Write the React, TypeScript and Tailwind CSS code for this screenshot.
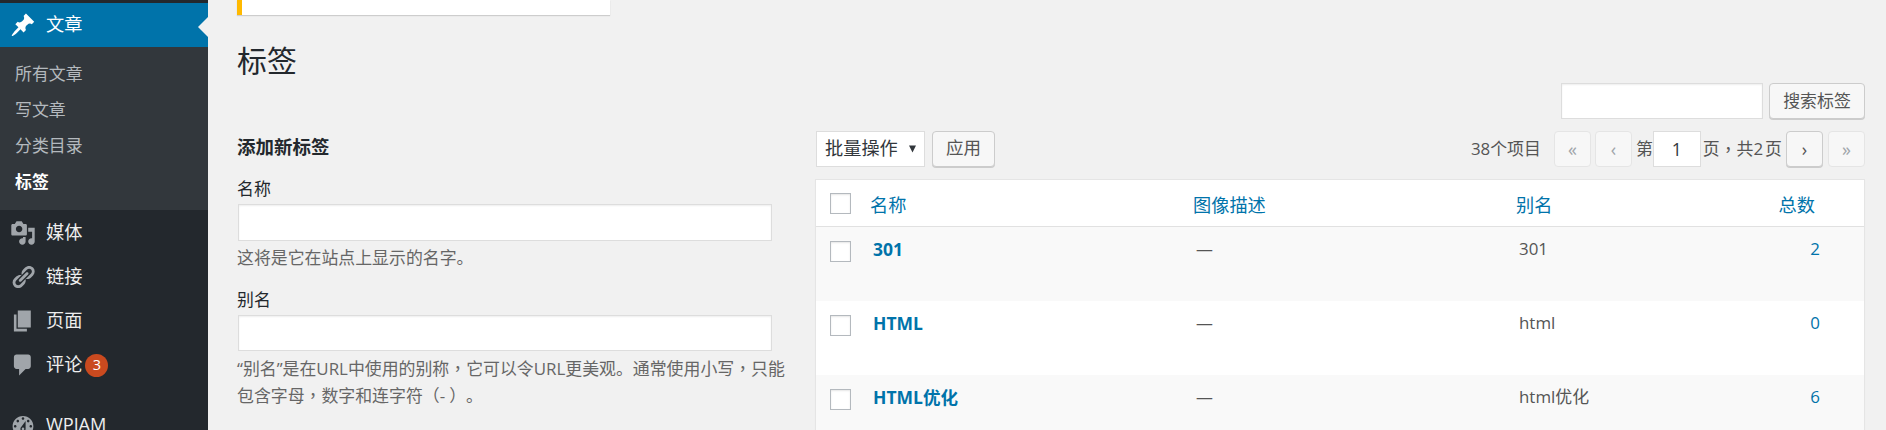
import type { ReactNode } from "react";

const FONT = "font-['Open_Sans','Noto_Sans_CJK_SC',sans-serif]";

const ICONS = {
  pin: "M10.44 3.02l1.82-1.82 6.36 6.35-1.83 1.82c-1.05-.68-2.48-.57-3.41.36l-.75.75c-.92.93-1.04 2.35-.35 3.41l-1.83 1.82-2.41-2.41-2.8 2.79c-.42.42-3.38 2.71-3.8 2.29s1.86-3.39 2.28-3.81l2.79-2.79L4.1 9.36l1.83-1.82c1.05.69 2.48.57 3.4-.36l.75-.75c.93-.92 1.05-2.35.36-3.41z",
  media:
    "M13 11V4c0-.55-.45-1-1-1h-1.67L9 1H5L3.67 3H2c-.55 0-1 .45-1 1v7c0 .55.45 1 1 1h10c.55 0 1-.45 1-1zM7 4.5c1.38 0 2.5 1.12 2.5 2.5S8.38 9.5 7 9.5 4.5 8.38 4.5 7 5.62 4.5 7 4.5zM14 6h5v10.5c0 1.38-1.12 2.5-2.5 2.5S14 17.88 14 16.5s1.12-2.5 2.5-2.5c.17 0 .34.02.5.05V9h-3V6zm-4 8.05V13h2v3.5c0 1.38-1.12 2.5-2.5 2.5S7 17.88 7 16.5 8.12 14 9.5 14c.17 0 .34.02.5.05z",
  link: "M17.74 2.76c1.68 1.69 1.68 4.41 0 6.1l-1.53 1.52c-1.12 1.12-2.7 1.47-4.14 1.09l2.62-2.61.76-.77.76-.76c.84-.84.84-2.2 0-3.04-.84-.85-2.2-.85-3.04 0l-.77.76-3.38 3.38c-.37-1.44-.02-3.02 1.1-4.14l1.52-1.53c1.69-1.68 4.42-1.68 6.1 0zM8.59 13.43l5.34-5.34c.42-.42.42-1.1 0-1.52-.44-.43-1.13-.39-1.53 0l-5.33 5.34c-.42.42-.42 1.1 0 1.52.44.43 1.13.39 1.52 0zm-.76 2.29l4.14-4.15c.38 1.44.03 3.02-1.09 4.14l-1.52 1.53c-1.69 1.68-4.41 1.68-6.1 0-1.68-1.68-1.68-4.42 0-6.1l1.53-1.52c1.12-1.12 2.7-1.47 4.14-1.1l-4.14 4.15c-.85.84-.85 2.2 0 3.05.84.84 2.2.84 3.04 0z",
  page: "M6 15V2h10v13H6zm-1 1h8v2H3V5h2v11z",
  comment: "M5 2h9c1.1 0 2 .9 2 2v7c0 1.1-.9 2-2 2h-2l-5 5v-5H5c-1.1 0-2-.9-2-2V4c0-1.1.9-2 2-2z",
  gauge:
    "M3.76 16h12.48c1.1-1.37 1.76-3.11 1.76-5 0-4.42-3.58-8-8-8s-8 3.58-8 8c0 1.89.66 3.63 1.76 5zM10 4c.55 0 1 .45 1 1s-.45 1-1 1-1-.45-1-1 .45-1 1-1zM6 6c.55 0 1 .45 1 1s-.45 1-1 1-1-.45-1-1 .45-1 1-1zm8 0c.55 0 1 .45 1 1s-.45 1-1 1-1-.45-1-1 .45-1 1-1zm-5.37 5.55L12 7v6c0 1.1-.9 2-2 2s-2-.9-2-2c0-.57.24-1.08.63-1.45zM4 10c.55 0 1 .45 1 1s-.45 1-1 1-1-.45-1-1 .45-1 1-1zm12 0c.55 0 1 .45 1 1s-.45 1-1 1-1-.45-1-1 .45-1 1-1zm-5 3c0-.55-.45-1-1-1s-1 .45-1 1 .45 1 1 1 1-.45 1-1z",
};

const ROWS = [
  { name: "301", slug: "301", count: 2, alt: true },
  { name: "HTML", slug: "html", count: 0, alt: false },
  { name: "HTML优化", slug: "html优化", count: 6, alt: true },
];

function DashIcon({ d, className }: { d: string; className: string }) {
  return (
    <svg viewBox="0 0 20 20" fill="currentColor" className={`w-[26px] h-[26px] shrink-0 ${className}`}>
      <path d={d} />
    </svg>
  );
}

// the reference's font centres the full-width comma, the TC cut does too
function Comma() {
  return <span className="font-['Noto_Sans_CJK_TC',sans-serif]">，</span>;
}

function MenuItem({ icon, label, badge }: { icon: string; label: string; badge?: number }) {
  return (
    <div className="h-[44px] flex items-center pl-[10px] text-[18.2px] text-[#eee]">
      <DashIcon d={icon} className="text-[#a0a5aa]" />
      <span className="ml-[10px]">{label}</span>
      {badge !== undefined && (
        <span className="ml-[3px] w-[23px] h-[23px] rounded-full bg-[#ca4a1f] text-white text-[14.5px] flex items-center justify-center">
          {badge}
        </span>
      )}
    </div>
  );
}

function Sidebar() {
  return (
    <aside className="w-[208px] shrink-0 bg-[#23282d] pt-[3px]">
      <div className="relative h-[44px] bg-[#0073aa] flex items-center pl-[10px] text-[18.2px] text-white">
        <DashIcon d={ICONS.pin} className="text-white" />
        <span className="ml-[10px]">文章</span>
        <span className="absolute right-0 top-[14px] w-0 h-0 border-y-[10px] border-y-transparent border-r-[10px] border-r-[#f1f1f1]" />
      </div>
      <div className="h-[163px] bg-[#32373c] pt-[9px] pl-[15px] text-[16.9px] text-[#b4b9be]">
        <div className="h-[36px] leading-[36px]">所有文章</div>
        <div className="h-[36px] leading-[36px]">写文章</div>
        <div className="h-[36px] leading-[36px]">分类目录</div>
        <div className="h-[36px] leading-[36px] font-bold text-white">标签</div>
      </div>
      <div className="pt-px">
        <MenuItem icon={ICONS.media} label="媒体" />
        <MenuItem icon={ICONS.link} label="链接" />
        <MenuItem icon={ICONS.page} label="页面" />
        <MenuItem icon={ICONS.comment} label="评论" badge={3} />
      </div>
      <div className="mt-[16px]">
        <MenuItem icon={ICONS.gauge} label="WPJAM" />
      </div>
    </aside>
  );
}

function Button({ children, className = "" }: { children: ReactNode; className?: string }) {
  return (
    <div
      className={`h-[36px] flex items-center justify-center bg-[#f7f7f7] border border-[#ccc] rounded-[4px] shadow-[0_1px_0_#ccc] text-[#555] ${className}`}
    >
      {children}
    </div>
  );
}

function PageButton({ children, active = false }: { children: string; active?: boolean }) {
  if (active) {
    return <Button className="w-[37px] text-[18px]">{children}</Button>;
  }
  return (
    <div className="w-[37px] h-[36px] flex items-center justify-center bg-[#f7f7f7] border border-[#e5e5e5] rounded-[4px] text-[#a0a5aa] text-[18px]">
      {children}
    </div>
  );
}

function TextInput({ className = "" }: { className?: string }) {
  return <div className={`bg-white border border-[#ddd] shadow-[inset_0_1px_2px_rgba(0,0,0,0.07)] ${className}`} />;
}

function Checkbox() {
  return <div className="w-[21px] h-[21px] bg-white border border-[#b4b9be] shadow-[inset_0_1px_2px_rgba(0,0,0,0.1)]" />;
}

function AddTagForm() {
  return (
    <div className="w-[553px] shrink-0 pt-[4px]">
      <h2 className="text-[18.5px] leading-[24px] font-bold text-[#23282d]">添加新标签</h2>
      <div className="mt-[18px] leading-[24px] text-[#23282d]">名称</div>
      <TextInput className="h-[37px] mt-[3px] ml-px w-[534px]" />
      <p className="mt-[4px] leading-[26px] text-[#666]">这将是它在站点上显示的名字。</p>
      <div className="mt-[17px] leading-[24px] text-[#23282d]">别名</div>
      <TextInput className="h-[36px] mt-[3px] ml-px w-[534px]" />
      <p className="mt-[4px] leading-[26px] text-[#666] [text-spacing-trim:space-all]">
        “别名”是在URL中使用的别称
        <Comma />
        它可以令URL更美观。通常使用小写
        <Comma />
        只能
        <br />
        包含字母
        <Comma />
        数字和连字符（-<span className="ml-[4px]">）</span>。
      </p>
    </div>
  );
}

function TagTable() {
  return (
    <div className="mt-[12px] bg-white border border-[#e5e5e5] shadow-[0_1px_1px_rgba(0,0,0,0.04)]">
      <div className="h-[47px] grid grid-cols-[54px_323px_323px_1fr] border-b border-[#e1e1e1] text-[#0073aa] text-[18.2px]">
        <div className="pl-[14px] pt-[13px]">
          <Checkbox />
        </div>
        <div className="pt-[13px] leading-[24px]">名称</div>
        <div className="pt-[13px] leading-[24px]">图像描述</div>
        <div className="pt-[13px] leading-[24px] flex justify-between pr-[49px]">
          <span>别名</span>
          <span>总数</span>
        </div>
      </div>
      {ROWS.map((row) => (
        <div
          key={row.name}
          className={`h-[74px] grid grid-cols-[54px_323px_323px_1fr] ${row.alt ? "bg-[#f9f9f9]" : "bg-white"}`}
        >
          <div className="pl-[14px] pt-[14px]">
            <Checkbox />
          </div>
          <div className="pl-[3px] pt-[10px] leading-[24px] font-bold text-[#0073aa] text-[17.5px]">{row.name}</div>
          <div className="pl-[3px] pt-[10px] leading-[24px] text-[#555]">—</div>
          <div className="pl-[3px] pt-[10px] leading-[24px] text-[#555] flex justify-between pr-[44px]">
            <span>{row.slug}</span>
            <span className="text-[#0073aa]">{row.count}</span>
          </div>
        </div>
      ))}
    </div>
  );
}

function TagList() {
  return (
    <div className="flex-1 min-w-0">
      <div className="flex items-start">
        <div className="ml-px w-[109px] h-[36px] bg-white border border-[#ddd] flex items-center pl-[8px] text-[#32373c]">
          <span className="text-[18.2px]">批量操作</span>
          <svg viewBox="0 0 8 8" className="w-[7px] h-[8px] ml-[11px] fill-[#32373c]">
            <path d="M0 0h8L4 8z" />
          </svg>
        </div>
        <Button className="ml-[7px] w-[63px] text-[17.5px] pb-[3px]">应用</Button>
        <div className="ml-auto flex items-center text-[#555] h-[36px]">
          <span className="mr-[13px] text-[#555]">38个项目</span>
          <PageButton>«</PageButton>
          <span className="w-[4px]" />
          <PageButton>‹</PageButton>
          <span className="ml-[4px]">第</span>
          <div className="w-[48px] h-[36px] bg-white border border-[#ddd] flex items-center justify-center text-[#32373c] text-[17.5px]">
            1
          </div>
          <span className="ml-[2px] mr-[4px] flex">
            页
            <Comma />
            共2<span className="ml-[2px]">页</span>
          </span>
          <PageButton active>›</PageButton>
          <span className="w-[5px]" />
          <PageButton>»</PageButton>
        </div>
      </div>
      <TagTable />
    </div>
  );
}

export default function App() {
  return (
    <div className={`flex h-[430px] overflow-hidden bg-[#f1f1f1] text-[16.9px] ${FONT}`}>
      <Sidebar />
      <main className="flex-1 min-w-0 pl-[29px] pr-[21px]">
        <div className="w-[373px] h-[15px] bg-white border-l-[5px] border-l-[#ffb900] shadow-[0_1px_1px_rgba(0,0,0,0.15)]" />
        <h1 className="h-[68px] pt-[24px] text-[29.9px] leading-[44px] text-[#23282d]">标签</h1>
        <div className="flex justify-end items-start">
          <TextInput className="h-[36px] w-[202px]" />
          <Button className="ml-[6px] w-[96px]">搜索标签</Button>
        </div>
        <div className="flex items-start mt-[12px] gap-[25px]">
          <AddTagForm />
          <TagList />
        </div>
      </main>
    </div>
  );
}
